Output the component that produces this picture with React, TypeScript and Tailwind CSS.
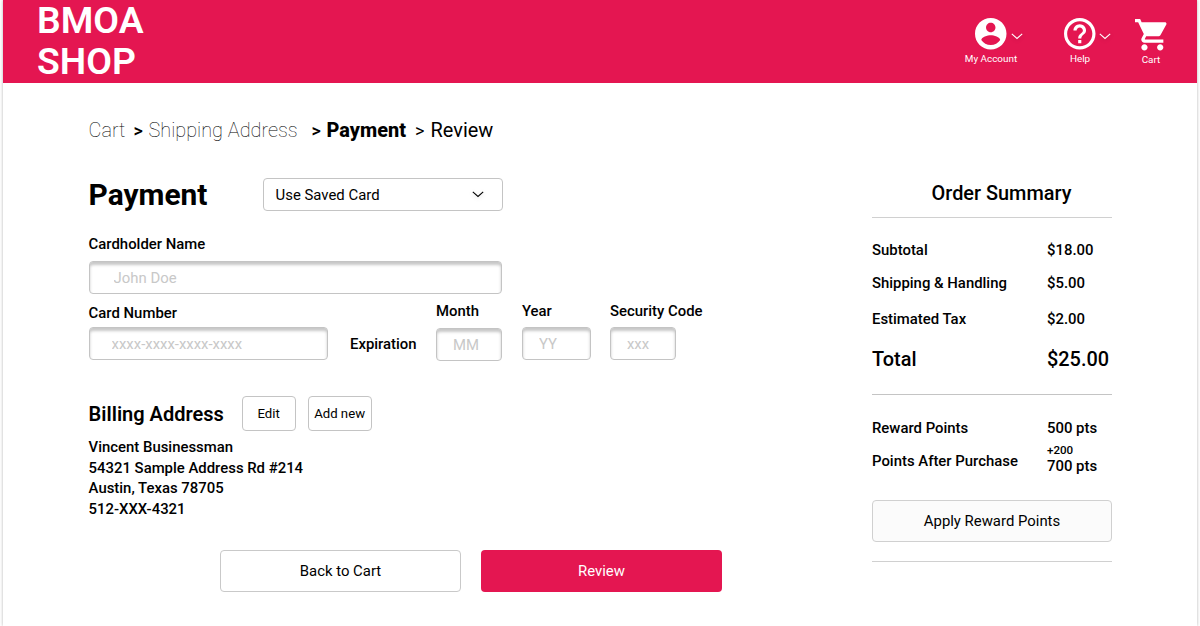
function Chevron({ className = "" }: { className?: string }) {
  return (
    <svg viewBox="0 0 12 7" fill="none" stroke="currentColor" strokeWidth="1.1" className={className}>
      <path d="M0.8 0.8 L6 5.4 L11.2 0.8" />
    </svg>
  );
}

function AccountIcon() {
  return (
    <svg viewBox="2 2 20 20" fill="currentColor" className="size-[31.5px]">
      <path d="M12 2C6.48 2 2 6.48 2 12s4.48 10 10 10 10-4.48 10-10S17.52 2 12 2zm0 3c1.66 0 3 1.34 3 3s-1.34 3-3 3-3-1.34-3-3 1.34-3 3-3zm0 14.2c-2.5 0-4.71-1.28-6-3.22.03-1.99 4-3.08 6-3.08 1.99 0 5.97 1.09 6 3.08-1.29 1.94-3.5 3.22-6 3.22z" />
    </svg>
  );
}

function HelpIcon() {
  return (
    <svg viewBox="2 2 20 20" fill="currentColor" className="size-[31.5px]">
      <path d="M11 18h2v-2h-2v2zm1-16C6.48 2 2 6.48 2 12s4.48 10 10 10 10-4.48 10-10S17.52 2 12 2zm0 18c-4.41 0-8-3.59-8-8s3.59-8 8-8 8 3.59 8 8-3.59 8-8 8zm0-14c-2.21 0-4 1.79-4 4h2c0-1.1.9-2 2-2s2 .9 2 2c0 2-3 1.75-3 5h2c0-2.25 3-2.5 3-5 0-2.21-1.79-4-4-4z" />
    </svg>
  );
}

function CartIcon() {
  return (
    <svg viewBox="1 2 20 20" fill="currentColor" className="size-[31.5px] overflow-visible">
      <path d="M7 18c-1.1 0-1.99.9-1.99 2S5.9 22 7 22s2-.9 2-2-.9-2-2-2zM1 2v2h2l3.6 7.59-1.35 2.45c-.16.28-.25.61-.25.96 0 1.1.9 2 2 2h12v-2H7.42c-.14 0-.25-.11-.25-.25l.03-.12.9-1.63h7.45c.75 0 1.41-.41 1.75-1.03l3.58-6.49c.08-.14.12-.31.12-.48 0-.55-.45-1-1-1H5.21l-.94-2H1zm16 16c-1.1 0-1.99.9-1.99 2s.89 2 1.99 2 2-.9 2-2-.9-2-2-2z" />
    </svg>
  );
}

function Field({ className, placeholder, label }: { className: string; placeholder: string; label: string }) {
  return (
    <input
      aria-label={label}
      placeholder={placeholder}
      className={`block rounded-[4px] border border-[#c4c4c4] bg-white shadow-[inset_0_3px_3px_rgba(0,0,0,0.22)] outline-none placeholder:text-[#c8c8c8] ${className}`}
    />
  );
}

function Row({ label, value, className = "" }: { label: string; value: string; className?: string }) {
  return (
    <div className={`flex ${className}`}>
      <span className="w-[175px] shrink-0">{label}</span>
      <span className="whitespace-nowrap">{value}</span>
    </div>
  );
}

export default function App() {
  return (
    <div className="h-[626px] overflow-hidden bg-white px-[3px] font-['Roboto',sans-serif] text-[14.9px] leading-5 text-black">
      <div className="h-full bg-white shadow-[0_0_3px_rgba(0,0,0,0.3)]">
        <header className="flex h-[83px] justify-between bg-[#e41651] text-white">
          <div className="pl-[34px] text-[37.3px] leading-[41px] font-semibold">
            BMOA
            <br />
            SHOP
          </div>
          <nav className="flex pt-[18px] pr-[30px] text-[9.9px] leading-3">
            <div className="flex w-[54px] flex-col items-center">
              <AccountIcon />
              <span className="mt-[3.5px] whitespace-nowrap">My Account</span>
            </div>
            <Chevron className="mt-[15px] -ml-[7px] h-[7px] w-3 drop-shadow-sm" />
            <div className="ml-[41px] flex w-8 flex-col items-center">
              <HelpIcon />
              <span className="mt-[3.5px]">Help</span>
            </div>
            <Chevron className="mt-[15px] ml-[3px] h-[7px] w-3 drop-shadow-sm" />
            <div className="mt-px ml-[24px] flex w-8 flex-col items-center">
              <CartIcon />
              <span className="mt-[3px]">Cart</span>
            </div>
          </nav>
        </header>

        <div className="flex">
          <main className="w-[783px] pl-[85.6px]">
            <nav className="mt-[35px] flex h-6 items-center pt-[2px] text-[19.9px] leading-6 whitespace-nowrap">
              <span className="w-[45px] font-thin">Cart</span>
              <span className="w-[15px] text-[18px] font-medium">&gt;</span>
              <span className="w-[163px] font-thin">Shipping Address</span>
              <span className="w-[15px] text-[18px] font-medium">&gt;</span>
              <span className="w-[88.5px] font-extrabold">Payment</span>
              <span className="w-[15.5px] text-[18px]">&gt;</span>
              <span>Review</span>
            </nav>

            <div className="mt-[36px] flex h-[33px] items-center">
              <h1 className="w-[174px] text-[29.9px] leading-[34px] font-bold">Payment</h1>
              <button className="flex h-[33px] w-[240px] items-center justify-between rounded-[4px] border border-[#c4c4c4] pr-[18px] pl-3">
                Use Saved Card
                <Chevron className="-mt-px h-[7px] w-3 drop-shadow-sm" />
              </button>
            </div>

            <div className="mt-[23px] font-medium">Cardholder Name</div>
            <Field label="Cardholder Name" placeholder="John Doe" className="mt-[7px] h-[33px] w-[413px] pl-6" />

            <div className="mt-[7px] flex">
              <div className="w-[261.4px] pt-[2px]">
                <div className="font-medium">Card Number</div>
                <Field label="Card Number" placeholder="xxxx-xxxx-xxxx-xxxx" className="mt-1 h-[33px] w-[239px] pl-[22px]" />
              </div>
              <div className="w-[86px] pt-[33px] font-medium">Expiration</div>
              <div className="w-[86px]">
                <div className="font-medium">Month</div>
                <Field label="Month" placeholder="MM" className="mt-[7px] h-[33px] w-[66px] pl-4" />
              </div>
              <div className="w-[88px]">
                <div className="font-medium">Year</div>
                <Field label="Year" placeholder="YY" className="mt-[6px] h-[33px] w-[69px] pl-4" />
              </div>
              <div>
                <div className="font-medium">Security Code</div>
                <Field label="Security Code" placeholder="xxx" className="mt-[6px] h-[33px] w-[66px] pl-4" />
              </div>
            </div>

            <div className="mt-[35px] flex h-[35px] items-center text-[13.2px]">
              <h2 className="pt-px w-[153px] text-[20px] font-semibold">Billing Address</h2>
              <button className="h-[35px] w-[54px] rounded-[4px] border border-[#c4c4c4]">Edit</button>
              <button className="ml-3 h-[35px] w-[64px] rounded-[4px] border border-[#c4c4c4] whitespace-nowrap">Add new</button>
            </div>

            <address className="mt-[6px] leading-[20.7px] font-medium not-italic">
              Vincent Businessman
              <br />
              54321 Sample Address Rd #214
              <br />
              Austin, Texas 78705
              <br />
              512-XXX-4321
            </address>

            <div className="mt-[30.4px] ml-[131.4px] flex gap-[20px]">
              <button className="h-[42px] w-[241px] rounded-[4px] border border-[#c9c9c9]">Back to Cart</button>
              <button className="h-[42px] w-[241px] rounded-[4px] bg-[#e41651] text-white">Review</button>
            </div>
          </main>

          <aside className="ml-[86px] w-[240px] pt-[99px] font-medium">
            <h2 className="pl-[19px] text-center text-[19.9px] leading-6">Order Summary</h2>
            <div className="mt-[11px] border-t border-[#d0d0d0]" />
            <Row className="mt-[22px]" label="Subtotal" value="$18.00" />
            <Row className="mt-[13px]" label="Shipping & Handling" value="$5.00" />
            <Row className="mt-[16px]" label="Estimated Tax" value="$2.00" />
            <Row className="mt-[19px] text-[19.9px] leading-6" label="Total" value="$25.00" />
            <div className="mt-[22px] border-t border-[#c4c4c4]" />
            <Row className="mt-[23px]" label="Reward Points" value="500 pts" />
            <div className="mt-[5px] flex items-center">
              <span className="w-[175px] shrink-0 pt-[3px]">Points After Purchase</span>
              <span className="whitespace-nowrap">
                <span className="block text-[11.6px] leading-[14px]">+200</span>
                <span className="block leading-[18px]">700 pts</span>
              </span>
            </div>
            <button className="mt-[25px] block h-[42px] w-full rounded-[4px] border border-[#d0d0d0] bg-[#fbfbfb] font-normal">
              Apply Reward Points
            </button>
            <div className="mt-[19px] border-t border-[#d0d0d0]" />
          </aside>
        </div>
      </div>
    </div>
  );
}
